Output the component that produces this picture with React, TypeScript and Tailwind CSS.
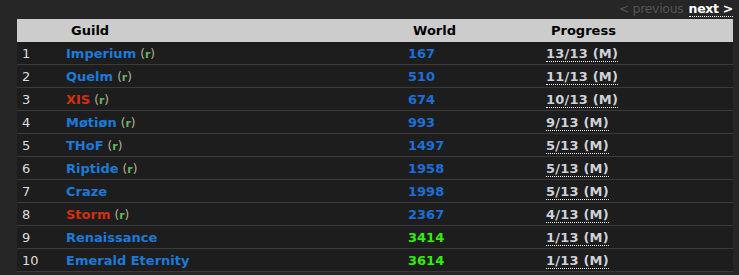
import React from "react";

type Row = { rank: number; name: string; red?: boolean; r?: boolean; world: string; green?: boolean; prog: string };

const rows: Row[] = [
  { rank: 1, name: "Imperium", r: true, world: "167", prog: "13/13 (M)" },
  { rank: 2, name: "Quelm", r: true, world: "510", prog: "11/13 (M)" },
  { rank: 3, name: "XIS", red: true, r: true, world: "674", prog: "10/13 (M)" },
  { rank: 4, name: "Møtiøn", r: true, world: "993", prog: "9/13 (M)" },
  { rank: 5, name: "THoF", r: true, world: "1497", prog: "5/13 (M)" },
  { rank: 6, name: "Riptide", r: true, world: "1958", prog: "5/13 (M)" },
  { rank: 7, name: "Craze", world: "1998", prog: "5/13 (M)" },
  { rank: 8, name: "Storm", red: true, r: true, world: "2367", prog: "4/13 (M)" },
  { rank: 9, name: "Renaissance", world: "3414", green: true, prog: "1/13 (M)" },
  { rank: 10, name: "Emerald Eternity", world: "3614", green: true, prog: "1/13 (M)" },
];

const font = { fontFamily: "Tahoma, 'DejaVu Sans', Verdana, sans-serif" };

export default function App() {
  return (
    <div className="w-[739px] h-[275px] bg-[#262626] overflow-hidden" style={font}>
      <div className="h-[19px] flex justify-end items-start pr-[6px] text-[12.5px] leading-[15px] pt-[1px] tracking-[-0.3px]">
        <span className="text-[#555555]">&lt; previous</span>
        <span className="ml-[5px] font-bold text-white border-b border-dotted border-white">next &gt;</span>
      </div>
      <div className="ml-[17px] w-[716px] bg-[#1d1d1d]">
        <div className="h-[23px] bg-[#cccccc] grid grid-cols-[54px_342px_138px_1fr] items-center text-[13px] font-bold text-black">
          <div></div>
          <div>Guild</div>
          <div>World</div>
          <div>Progress</div>
        </div>
        {rows.map((r) => (
          <div key={r.rank} className="h-[23px] pt-[1px] border-b border-[#3a3a3a] grid grid-cols-[49px_342px_138px_1fr] items-center text-[13px]">
            <div className="pl-[5px] text-[#dddddd]">{r.rank}</div>
            <div className="flex items-baseline">
              <span className={"font-bold " + (r.red ? "text-[#d4300c]" : "text-[#1c7ad8]")}>{r.name}</span>
              {r.r && (
                <span className="ml-[4px] text-[12px] text-[#b9b29a]">
                  (<span className="text-[#5fb85f] font-bold text-[11px]">r</span>)
                </span>
              )}
            </div>
            <div className={"font-bold " + (r.green ? "text-[#2ef000]" : "text-[#1a6fdc]")}>{r.world}</div>
            <div>
              <span className="font-bold text-[#cdd2d8] border-b border-dotted border-white tracking-[0.2px]">{r.prog}</span>
            </div>
          </div>
        ))}
      </div>
    </div>
  );
}
